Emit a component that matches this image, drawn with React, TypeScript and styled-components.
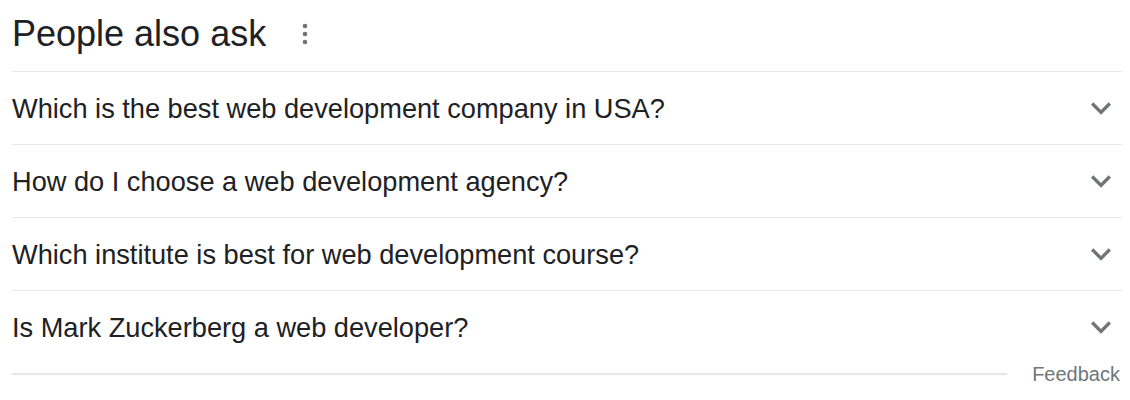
import styled, { createGlobalStyle } from 'styled-components';

const GlobalStyle = createGlobalStyle`
body {
  margin: 0;
  background: #ffffff;
  font-family: "Liberation Sans", Arial, sans-serif;
}
`

const questions = [
  'Which is the best web development company in USA?',
  'How do I choose a web development agency?',
  'Which institute is best for web development course?',
  'Is Mark Zuckerberg a web developer?',
]

function Chevron() {
  return (
    <svg width="40" height="40" viewBox="0 0 24 24">
      <path d="M16.59 8.59L12 13.17 7.41 8.59 6 10l6 6 6-6z" fill="#70757a" />
    </svg>
  )
}

function MoreVert() {
  return (
    <svg width="8" height="24" viewBox="0 0 8 24">
      <circle cx="4" cy="4" r="2.3" fill="#70757a" />
      <circle cx="4" cy="12" r="2.3" fill="#70757a" />
      <circle cx="4" cy="20" r="2.3" fill="#70757a" />
    </svg>
  )
}

export default function App() {
  return (
    <Page>
      <GlobalStyle />
      <Header>
        <Title>People also ask</Title>
        <MenuButton>
          <MoreVert />
        </MenuButton>
      </Header>
      {questions.map((q) => (
        <Row key={q}>
          <Question>{q}</Question>
          <Chevron />
        </Row>
      ))}
      <Footer>
        <Rule />
        <FeedbackLink>Feedback</FeedbackLink>
      </Footer>
    </Page>
  )
}

const Page = styled.div`
width: 1110px;
padding-left: 12px;
display: flex;
flex-direction: column;
`

const Header = styled.div`
height: 71px;
padding-bottom: 3px;
box-sizing: border-box;
display: flex;
align-items: center;
`

const Title = styled.div`
font-size: 36px;
line-height: 36px;
color: #202124;
`

const MenuButton = styled.div`
margin-left: 35px;
display: flex;
align-items: center;
`

const Row = styled.div`
height: 73px;
box-sizing: border-box;
border-top: 1px solid #e8e8e8;
display: flex;
align-items: center;
justify-content: space-between;
padding-right: 1px;
`

const Question = styled.div`
font-size: 27.2px;
line-height: 27px;
color: #202124;
`

const Footer = styled.div`
height: 22px;
display: flex;
align-items: center;
`

const Rule = styled.div`
flex: 1;
height: 2px;
background: #e6e6e6;
`

const FeedbackLink = styled.div`
margin-left: 25px;
margin-right: 2px;
font-size: 20px;
line-height: 20px;
color: #70757a;
`
